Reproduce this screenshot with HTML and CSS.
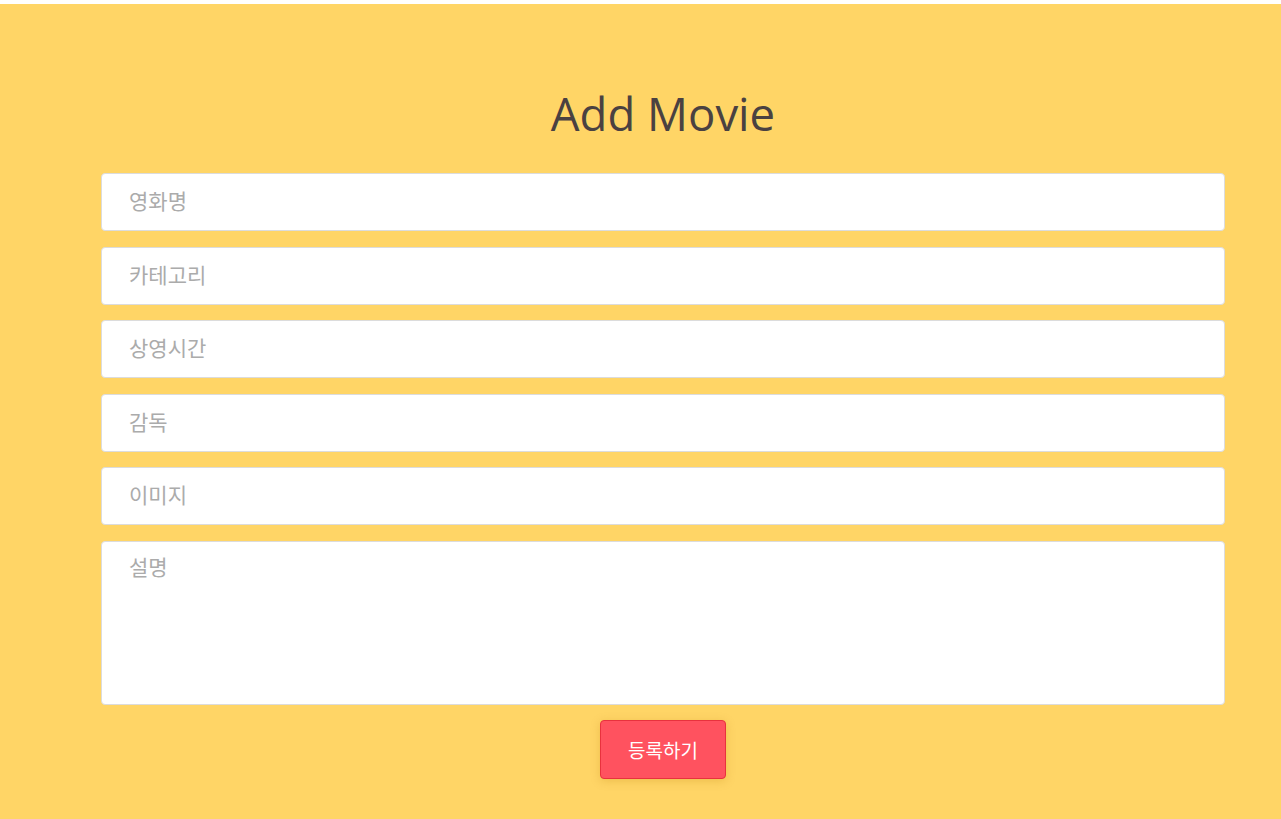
FILE: index.html
```html
<!DOCTYPE html>
<html lang="ko">
<head>
<meta charset="utf-8">
<title>Add Movie</title>
<link rel="stylesheet" href="styles.css">
</head>
<body>
<main class="page">
  <h1 class="title">Add Movie</h1>
  <form class="form">
    <input class="field" type="text" placeholder="영화명">
    <input class="field" type="text" placeholder="카테고리">
    <input class="field" type="text" placeholder="상영시간">
    <input class="field" type="text" placeholder="감독">
    <input class="field" type="text" placeholder="이미지">
    <textarea class="field area" placeholder="설명"></textarea>
    <button class="submit" type="button">등록하기</button>
  </form>
</main>
</body>
</html>
```

FILE: styles.css
```css
html, body {
  margin: 0;
  padding: 0;
  background: #ffffff;
}
body {
  padding-top: 4px;
  font-family: "Noto Sans CJK KR", "Noto Sans", sans-serif;
}
.page {
  background: #ffd566;
  min-height: 815px;
  box-sizing: border-box;
  padding: 82px 56px 40px 101px;
}
.title {
  margin: 0 0 32px;
  text-align: center;
  font-family: "Open Sans", "Noto Sans", sans-serif;
  font-weight: 400;
  font-size: 45.5px;
  line-height: 55px;
  color: #4a4141;
}
.form {
  display: flex;
  flex-direction: column;
  align-items: center;
  gap: 15.5px;
}
.field {
  display: block;
  width: 100%;
  height: 58px;
  box-sizing: border-box;
  border: 1px solid #dcdcdc;
  border-radius: 4px;
  background: #fff;
  padding: 0 27px 4px;
  font-family: "Noto Sans CJK KR", "Noto Sans", sans-serif;
  font-size: 21px;
  color: #333;
  outline: none;
}
.field::placeholder {
  color: #ababab;
}
.area {
  height: 164px;
  padding-top: 9px;
  resize: none;
}
.submit {
  width: 126px;
  height: 59px;
  margin-top: 0;
  background: #ff525f;
  border: 1px solid #e8323e;
  border-radius: 4px;
  color: #fff;
  font-family: "Noto Sans CJK KR", "Noto Sans", sans-serif;
  font-size: 19px;
  box-shadow: 0 2px 10px rgba(180, 120, 0, 0.25);
}
```
